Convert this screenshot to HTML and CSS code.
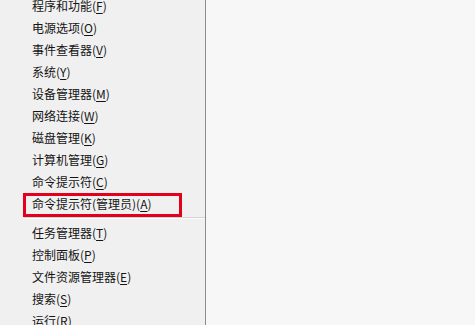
FILE: index.html
```html
<!DOCTYPE html>
<html lang="zh-CN">
<head>
  <meta charset="UTF-8">
  <title>快速链接菜单</title>
  <link rel="stylesheet" href="styles.css">
</head>
<body>
  <div class="screen">
    <div class="menu">
      <ul class="menu-list">
        <li>程序和功能(<u>F</u>)</li>
        <li>电源选项(<u>O</u>)</li>
        <li>事件查看器(<u>V</u>)</li>
        <li>系统(<u>Y</u>)</li>
        <li>设备管理器(<u>M</u>)</li>
        <li>网络连接(<u>W</u>)</li>
        <li>磁盘管理(<u>K</u>)</li>
        <li>计算机管理(<u>G</u>)</li>
        <li>命令提示符(<u>C</u>)</li>
        <li class="marked">命令提示符(管理员)(<u>A</u>)</li>
        <li class="sep"></li>
        <li>任务管理器(<u>T</u>)</li>
        <li>控制面板(<u>P</u>)</li>
        <li>文件资源管理器(<u>E</u>)</li>
        <li>搜索(<u>S</u>)</li>
        <li>运行(<u>R</u>)</li>
      </ul>
    </div>
    <div class="desktop"></div>
  </div>
</body>
</html>
```

FILE: styles.css
```css
html, body {
  margin: 0;
  height: 100%;
  overflow: hidden;
}
body {
  font-family: "Noto Sans CJK SC", "Microsoft YaHei", sans-serif;
  font-size: 12px;
  color: #141414;
  background-color: #f7f7f7;
}
.screen {
  display: flex;
  height: 325px;
}
.menu {
  width: 205px;
  background-color: #f0f0f0;
  border-right: 1px solid #8c8c8c;
  flex-shrink: 0;
}
.desktop {
  flex: 1;
  background-color: #f7f7f7;
}
.menu-list {
  list-style: none;
  margin: -5px 0 0 0;
  padding: 0;
}
.menu-list li {
  height: 22px;
  line-height: 22px;
  padding-left: 32px;
  white-space: nowrap;
  position: relative;
}
.menu-list u {
  text-decoration-thickness: 1px;
  text-underline-offset: 2px;
}
.menu-list li.sep {
  height: 5px;
  padding: 0;
  margin-left: 24px;
}
.menu-list li.sep::before {
  content: "";
  display: block;
  margin-top: 2px;
  height: 1px;
  background-color: #d4d4d4;
  border-bottom: 1px solid #fcfcfc;
}
.menu-list li.marked::after {
  content: "";
  position: absolute;
  left: 23px;
  top: 0;
  width: 153px;
  height: 18px;
  border: 3px solid #e3001b;
}
```
